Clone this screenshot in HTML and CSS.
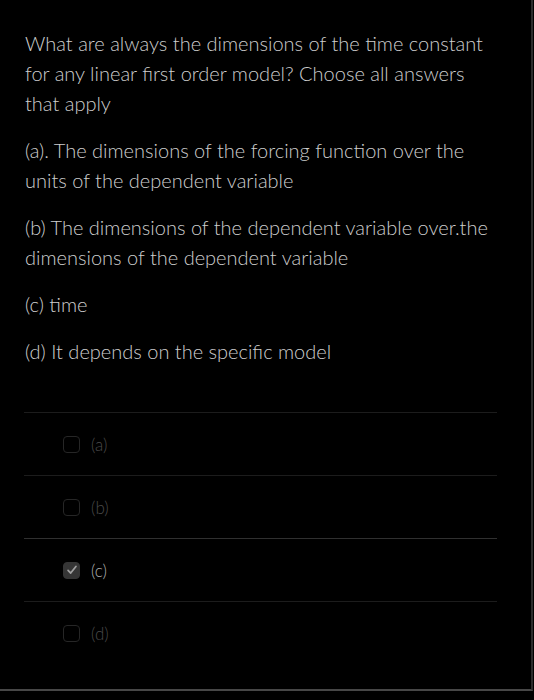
FILE: index.html
```html
<!DOCTYPE html>
<html lang="en">
<head>
<meta charset="utf-8">
<title>Question</title>
<link rel="stylesheet" href="styles.css">
</head>
<body>
<div class="frame">
  <div class="question">
    <p>What are always the dimensions of the time constant for any linear first order model? Choose all answers that apply</p>
    <p>(a). The dimensions of the forcing function over the units of the dependent variable</p>
    <p>(b) The dimensions of the dependent variable over.the dimensions of the dependent variable</p>
    <p>(c) time</p>
    <p>(d) It depends on the specific model</p>
  </div>
  <div class="answers">
    <div class="answer"><span class="box"></span><span class="label">(a)</span></div>
    <div class="answer"><span class="box"></span><span class="label">(b)</span></div>
    <div class="answer selected"><span class="box checked"><svg viewBox="0 0 16 16" width="14" height="14"><path d="M3.5 8.5 L6.5 11.5 L12.5 4" fill="none" stroke="#a0a0a0" stroke-width="2" stroke-linecap="round" stroke-linejoin="round"/></svg></span><span class="label">(c)</span></div>
    <div class="answer"><span class="box"></span><span class="label">(d)</span></div>
  </div>
</div>
</body>
</html>
```

FILE: styles.css
```css
html, body {
  margin: 0;
  padding: 0;
  background: #000;
}
body {
  font-family: Lato, "Liberation Sans", sans-serif;
  width: 534px;
  height: 700px;
  overflow: hidden;
}
.frame {
  width: 531px;
  height: 689px;
  border-right: 2px solid #2c2c2c;
  border-bottom: 2px solid #474747;
  box-sizing: content-box;
}
.question {
  padding: 28px 30px 0 25px;
  color: #cecece;
  font-size: 20px;
  font-weight: 300;
  line-height: 30px;
}
.question p {
  margin: 0 0 17px 0;
}
.answers {
  margin: 46px 34px 0 24px;
}
.answer {
  display: flex;
  align-items: center;
  height: 62px;
  border-top: 1px solid #1c1c1c;
  padding-left: 39px;
}
.answer.selected {
  border-top-color: #303030;
}
.box {
  width: 15px;
  height: 15px;
  border: 1.5px solid #262626;
  border-radius: 4px;
  display: flex;
  align-items: center;
  justify-content: center;
}
.box.checked {
  background: #353535;
  border-color: #353535;
}
.label {
  margin-left: 11px;
  font-size: 17px;
  font-weight: 300;
  color: #4a4a4a;
}
.selected .label {
  color: #b0b0b0;
}
```
